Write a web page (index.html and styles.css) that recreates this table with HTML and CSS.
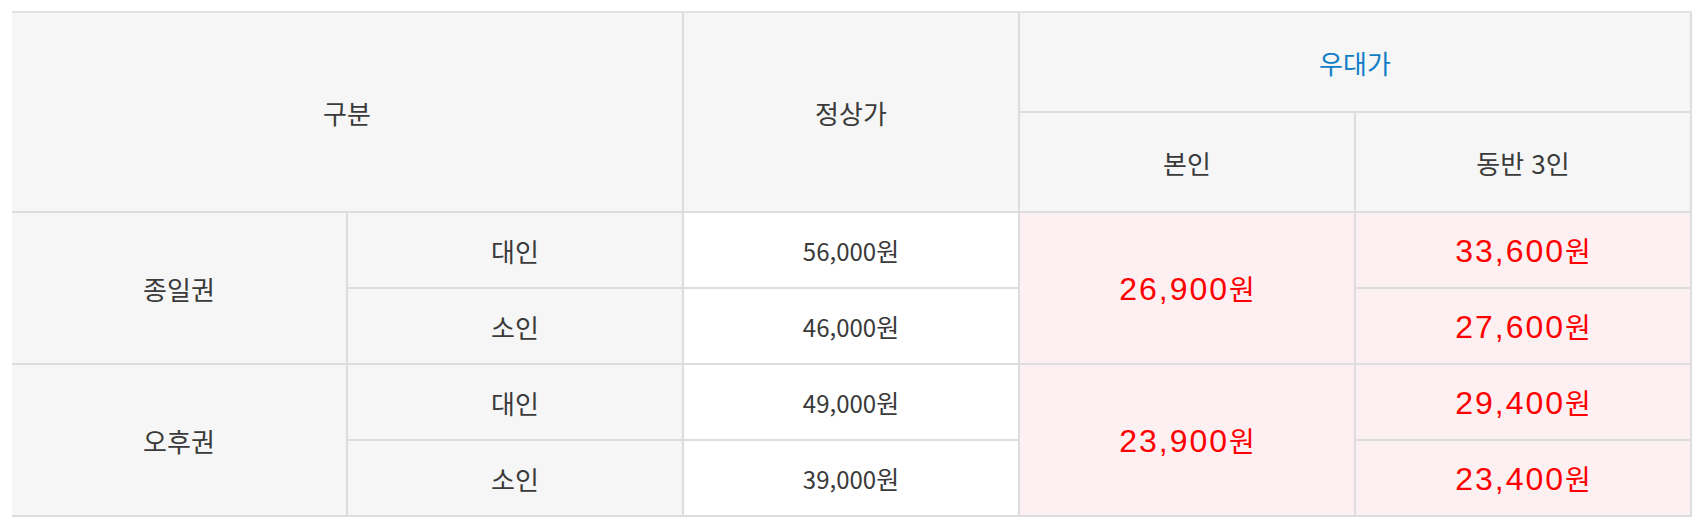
FILE: index.html
```html
<!DOCTYPE html>
<html lang="ko">
<head>
<meta charset="utf-8">
<title>요금표</title>
<link rel="stylesheet" href="styles.css">
</head>
<body>
<div class="wrap">
  <table class="price-table">
    <colgroup>
      <col class="c"><col class="c"><col class="c"><col class="c"><col class="c">
    </colgroup>
    <thead>
      <tr class="head-row">
        <th colspan="2" rowspan="2">구분</th>
        <th rowspan="2">정상가</th>
        <th colspan="2" class="accent">우대가</th>
      </tr>
      <tr class="head-row">
        <th>본인</th>
        <th>동반 3인</th>
      </tr>
    </thead>
    <tbody>
      <tr class="body-row">
        <th rowspan="2">종일권</th>
        <th>대인</th>
        <td class="normal">56,000<span class="unit">원</span></td>
        <td rowspan="2" class="deal">26,900<span class="won">원</span></td>
        <td class="deal">33,600<span class="won">원</span></td>
      </tr>
      <tr class="body-row">
        <th>소인</th>
        <td class="normal">46,000<span class="unit">원</span></td>
        <td class="deal">27,600<span class="won">원</span></td>
      </tr>
      <tr class="body-row">
        <th rowspan="2">오후권</th>
        <th>대인</th>
        <td class="normal">49,000<span class="unit">원</span></td>
        <td rowspan="2" class="deal">23,900<span class="won">원</span></td>
        <td class="deal">29,400<span class="won">원</span></td>
      </tr>
      <tr class="body-row">
        <th>소인</th>
        <td class="normal">39,000<span class="unit">원</span></td>
        <td class="deal">23,400<span class="won">원</span></td>
      </tr>
    </tbody>
  </table>
</div>
</body>
</html>
```

FILE: styles.css
```css
html, body {
  margin: 0;
  padding: 0;
  background: #ffffff;
}

.wrap {
  padding: 11px 0 0 12px;
}

.price-table {
  width: 1680px;
  table-layout: fixed;
  border-collapse: separate;
  border-spacing: 0;
  border-top: 2px solid #dfe3e8;
  font-family: "Noto Sans CJK KR", "Liberation Sans", sans-serif;
  font-size: 26px;
  color: #3a3a3a;
}

.price-table th,
.price-table td {
  padding: 0;
  text-align: center;
  vertical-align: middle;
  font-weight: 400;
  border-right: 2px solid #dddddd;
  border-bottom: 2px solid #dddddd;
  background: #f6f6f6;
}

.head-row {
  height: 100px;
}

.body-row {
  height: 76px;
}

.accent {
  color: #0e7dc6;
}

.price-table td.normal {
  background: #ffffff;
  font-size: 24px;
}

.unit {
  font-size: 25px;
}

.price-table td.deal {
  background: #fdf0f3;
  color: #ff0000;
  font-family: "Liberation Sans", "Noto Sans CJK KR", sans-serif;
  font-size: 32px;
  letter-spacing: 2px;
}

.won {
  font-family: "Noto Sans CJK KR", sans-serif;
  font-size: 28px;
  letter-spacing: 0;
}
```
